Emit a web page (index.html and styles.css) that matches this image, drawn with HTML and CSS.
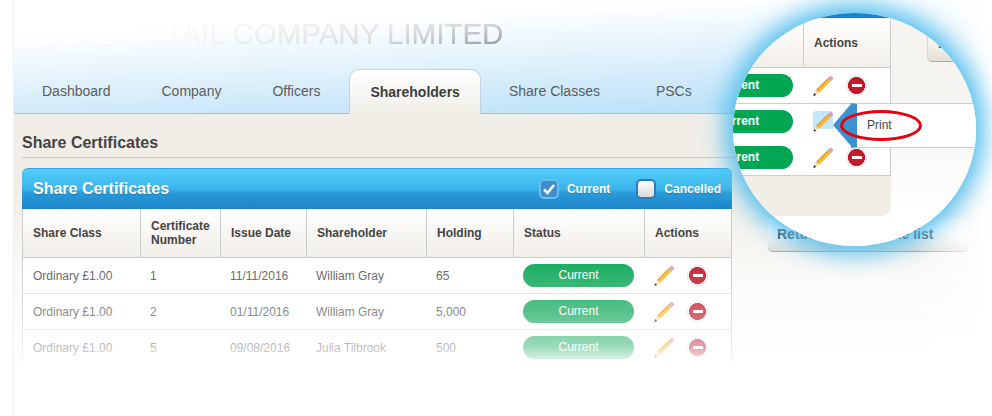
FILE: index.html
```html
<!DOCTYPE html>
<html lang="en">
<head>
    <meta charset="UTF-8">
    <title>Share Certificates</title>
    <link rel="stylesheet" href="styles.css">
</head>
<body>

    <svg class="sprites" width="0" height="0">
        <symbol id="pencil" viewBox="0 0 20 21">
            <polygon points="3,15 14.5,3.5 17.5,6.5 6,18" fill="#f9bd35"/>
            <polygon points="3,15 14.5,3.5 15.4,4.4 3.9,15.9" fill="#e8982a"/>
            <polygon points="3,15 6,18 1,20.5" fill="#f3dcae"/>
            <polygon points="0.3,21 1.2,18 3.2,19.9" fill="#222"/>
            <polygon points="14.5,3.5 17.5,6.5 18.7,5.3 15.7,2.3" fill="#a9a9a9"/>
            <polygon points="15.7,2.3 18.7,5.3 20,4 20,2.6 17.6,0.4 17,1" fill="#ee9aa8"/>
        </symbol>
        <symbol id="tick" viewBox="0 0 14 12">
            <polyline points="2,6.5 5.5,10 12,2" fill="none" stroke="#fff" stroke-width="2.6"/>
        </symbol>
    </svg>

    <div class="page">
        <header class="masthead">
            <div class="brand">THE RETAIL COMPANY LIMITED</div>
            <nav class="tabs">
                <a class="tab">Dashboard</a>
                <a class="tab">Company</a>
                <a class="tab">Officers</a>
                <a class="tab active">Shareholders</a>
                <a class="tab">Share Classes</a>
                <a class="tab">PSCs</a>
            </nav>
        </header>

        <main class="content">
            <h2>Share Certificates</h2>
            <div class="columns">
                <section class="card">
                    <div class="card-head">
                        <h3>Share Certificates</h3>
                        <label class="filter"><span class="box checked"><svg width="14" height="12"><use href="#tick"/></svg></span>Current</label>
                        <label class="filter"><span class="box"></span>Cancelled</label>
                    </div>
                    <table class="cert-table">
                        <colgroup>
                            <col class="w-class"><col class="w-number"><col class="w-date"><col class="w-holder"><col class="w-holding"><col class="w-status"><col class="w-actions">
                        </colgroup>
                        <thead>
                            <tr>
                                <th>Share Class</th>
                                <th>Certificate Number</th>
                                <th>Issue Date</th>
                                <th>Shareholder</th>
                                <th>Holding</th>
                                <th>Status</th>
                                <th>Actions</th>
                            </tr>
                        </thead>
                        <tbody>
                            <tr>
                                <td>Ordinary £1.00</td><td>1</td><td>11/11/2016</td><td>William Gray</td><td>65</td>
                                <td><span class="pill">Current</span></td>
                                <td><div class="actions"><svg class="pencil"><use href="#pencil"/></svg><span class="remove"></span></div></td>
                            </tr>
                            <tr>
                                <td>Ordinary £1.00</td><td>2</td><td>01/11/2016</td><td>William Gray</td><td>5,000</td>
                                <td><span class="pill">Current</span></td>
                                <td><div class="actions"><svg class="pencil"><use href="#pencil"/></svg><span class="remove"></span></div></td>
                            </tr>
                            <tr>
                                <td>Ordinary £1.00</td><td>5</td><td>09/08/2016</td><td>Julia Tilbrook</td><td>500</td>
                                <td><span class="pill">Current</span></td>
                                <td><div class="actions"><svg class="pencil"><use href="#pencil"/></svg><span class="remove"></span></div></td>
                            </tr>
                        </tbody>
                    </table>
                </section>
                <aside class="side">
                    <a class="side-btn">Return to certificate list</a>
                </aside>
            </div>
        </main>

        <div class="fade"></div>

        <!-- magnified bit, same table again -->
        <div class="lens">
            <div class="lens-btn">Return</div>
            <div class="lens-panel">
                <table class="cert-table lens-table">
                    <colgroup>
                        <col class="w-status"><col class="w-actions">
                    </colgroup>
                    <thead>
                        <tr>
                            <th>Status</th>
                            <th>Actions</th>
                        </tr>
                    </thead>
                    <tbody>
                        <tr class="first">
                            <td><span class="pill solid">Current</span></td>
                            <td><div class="actions"><svg class="pencil"><use href="#pencil"/></svg><span class="remove"></span></div></td>
                        </tr>
                        <tr class="no-line">
                            <td><span class="pill solid">Current</span></td>
                            <td><div class="actions"><svg class="pencil hover"><use href="#pencil"/></svg><span class="remove hidden"></span></div></td>
                        </tr>
                        <tr class="last">
                            <td><span class="pill solid">Current</span></td>
                            <td><div class="actions"><svg class="pencil"><use href="#pencil"/></svg><span class="remove"></span></div></td>
                        </tr>
                    </tbody>
                </table>
            </div>
            <div class="popup">Print</div>
            <div class="ring"></div>
        </div>
    </div>

</body>
</html>
```

FILE: styles.css
```css
* {
    box-sizing: border-box;
    margin: 0;
    padding: 0;
}
html, body {
    height: 416px;
    overflow: hidden;
}
body {
    font-family: 'Liberation Sans', Arial, sans-serif;
    background-color: #fff;
    color: #555;
}
.sprites {
    position: absolute;
}
.page {
    position: relative;
    height: 416px;
    margin-left: 13px;
    border-left: 1px solid #f0f0ee;
    overflow: hidden;
}

/* top bit */
.masthead {
    height: 114px;
    padding-top: 17px;
    background: linear-gradient(177deg, #fff 22%, #e6f4fc 48%, #bde2f8 88%);
    border-bottom: 1px solid #a9c0d0;
}
.brand {
    width: max-content;
    margin-left: 43px;
    height: 39px;
    font-size: 29.5px;
    line-height: 33px;
    background: linear-gradient(rgba(255,255,255,0.8), rgba(255,255,255,0) 85%), linear-gradient(to right, #fff 70px, #eee 170px, #ccc 330px, #8a8a8a 445px);
    -webkit-background-clip: text;
    background-clip: text;
    color: transparent;
}
.tabs {
    display: flex;
    padding-left: 2.5px;
    margin-top: 13px;
    height: 45px;
}
.tab {
    padding: 0 25.5px;
    font-size: 14px;
    line-height: 44px;
    color: #5c5c5c;
}
.tab:last-child {
    margin-left: 5px;
}
.tab.active {
    margin: 0 2.5px 0 3.5px;
    padding: 0 20px;
    height: 45px;
    font-weight: bold;
    color: #3c3c3c;
    background: linear-gradient(#fff, #f1eee8);
    border: 1px solid #c3d3dd;
    border-bottom: none;
    border-radius: 10px 10px 0 0;
}

.content {
    height: 302px;
    padding: 0 24px 0 8px;
    background: linear-gradient(#f1eee8 80px, #f9f8f5 150px, #fff 260px);
}
h2 {
    padding: 20px 0 5px;
    font-size: 16px;
    line-height: 18px;
    color: #444;
    border-bottom: 1px solid #cbc8c2;
}
.columns {
    display: flex;
    align-items: flex-start;
    margin-top: 10px;
}
.card {
    width: 710px;
}
.card-head {
    display: flex;
    align-items: center;
    height: 41px;
    padding: 0 11px;
    background: linear-gradient(#52cdf9, #3cb4ec 50%, #2a9ad9 60%, #1b84c8);
    border-top: 1px solid #3a9fe0;
    border-radius: 6px 6px 0 0;
}
.card-head h3 {
    margin-right: auto;
    font-size: 16px;
    color: #fff;
    text-shadow: 0 1px 1px rgba(0,0,0,0.2);
}
.filter {
    display: flex;
    align-items: center;
    gap: 8px;
    margin-left: 26px;
    font-size: 12px;
    font-weight: bold;
    color: #fff;
    text-shadow: 0 1px 1px rgba(0,0,0,0.2);
}
.box {
    display: flex;
    align-items: center;
    justify-content: center;
    width: 20px;
    height: 20px;
    background: linear-gradient(#fff, #d8d8d8);
    border: 2px solid #2f78bd;
    border-radius: 5px;
}
.box.checked {
    background: #3f8fcf;
    border-color: #6fbbec;
}

.cert-table {
    width: 710px;
    table-layout: fixed;
    border-collapse: separate;
    border-spacing: 0;
    background: #fff;
}
.w-class { width: 118px; }
.w-number { width: 80px; }
.w-date { width: 86px; }
.w-holder { width: 120px; }
.w-holding { width: 87px; }
.w-status { width: 131px; }
.w-actions { width: 88px; }
.cert-table th {
    height: 49px;
    padding: 0 10px;
    font-size: 12px;
    line-height: 14px;
    text-align: left;
    color: #444;
    background: linear-gradient(#fff, #f1eee8);
    border-left: 1px solid #ccc;
    border-bottom: 1px solid #ccc;
}
.cert-table th:last-child {
    border-right: 1px solid #ccc;
}
.cert-table td {
    height: 36px;
    padding: 0 10px;
    font-size: 12px;
    border-bottom: 1px solid #ddd;
}
.cert-table td:first-child {
    border-left: 1px solid #ccc;
}
.cert-table td:last-child {
    border-right: 1px solid #ccc;
}
.pill {
    display: block;
    width: 111px;
    height: 23px;
    font-size: 12px;
    line-height: 22px;
    text-align: center;
    color: #fff;
    background: #0ea858;
    border-radius: 12px;
}
.actions {
    display: flex;
    align-items: center;
    gap: 13px;
}
.pencil {
    display: block;
    width: 20px;
    height: 21px;
}
.remove {
    display: flex;
    align-items: center;
    justify-content: center;
    width: 21px;
    height: 21px;
    background: radial-gradient(circle, #c8202f 0, #bd1728 8.2px, #fff 8.8px);
    border: 1px solid #dedede;
    border-radius: 50%;
}
.remove::after {
    content: '';
    width: 10px;
    height: 3px;
    background: #fff;
}

.side {
    margin: 50px 0 0 36px;
}
.side-btn {
    display: block;
    width: 200px;
    height: 34px;
    padding-left: 9px;
    font-size: 14px;
    font-weight: bold;
    line-height: 32px;
    color: #4a4a4a;
    background: linear-gradient(#fff 40%, #e2dfd7);
    border-bottom: 1px solid #aaa;
    border-radius: 5px;
}

/* page washes out at the bottom and right */
.fade {
    position: absolute;
    top: 0;
    left: 0;
    right: 0;
    bottom: 0;
    pointer-events: none;
    background:
        linear-gradient(rgba(255,255,255,0) 255px, rgba(255,255,255,0.12) 275px, rgba(255,255,255,0.3) 312px, rgba(255,255,255,0.58) 346px, #fff 368px),
        linear-gradient(to right, rgba(255,255,255,0) 900px, #fff 975px);
}

/* the magnifier */
.lens {
    position: absolute;
    left: 719px;
    top: 13px;
    width: 243px;
    height: 233px;
    overflow: hidden;
    background: linear-gradient(#f6f4f0 90px, #fff 200px);
    border-radius: 50%;
    box-shadow: 0 0 24px 8px #4dbcee;
}
.lens-panel {
    width: 158px;
    height: 203px;
    padding-top: 6px;
    background: linear-gradient(#1b84c8 5px, #f1eee8 5px);
    border-radius: 0 0 10px 0;
}
.lens-table {
    width: 219px;
    margin-left: -61px;
}
.lens-table .first td,
.lens-table .last td {
    border-bottom-color: #ccc;
}
.lens-table .no-line td {
    border-bottom-color: transparent;
}
.lens-table td:first-child {
    border-left: none;
}
.pill.solid {
    background: #00a651;
    font-weight: bold;
}
.remove.hidden {
    visibility: hidden;
}
.pencil.hover {
    background: linear-gradient(#c4e6fa 86%, transparent 86%);
    border-radius: 3px;
}
.lens-btn {
    position: absolute;
    left: 194px;
    top: 10px;
    width: 90px;
    height: 39px;
    padding: 11px 0 0 10px;
    font-size: 14px;
    font-weight: bold;
    line-height: 16px;
    color: #4a4a4a;
    background: linear-gradient(#f6f4f0 50%, #e2dfd7);
    border: 1px solid #d8d5cd;
    border-bottom: 1px solid #aaa;
    border-radius: 5px;
}
.popup {
    position: absolute;
    left: 118px;
    top: 90px;
    width: 140px;
    height: 45px;
    padding-left: 10px;
    font-size: 12px;
    line-height: 42px;
    color: #444;
    background: #fff;
    border-left: 6px solid #3b92d0;
    border-top: 1px solid #ccc;
    border-bottom: 1px solid #ccc;
}
.popup::before {
    content: '';
    position: absolute;
    left: -24px;
    top: 0;
    border-right: 18px solid #3b92d0;
    border-top: 21px solid transparent;
    border-bottom: 21px solid transparent;
}
.ring {
    position: absolute;
    left: 107px;
    top: 97px;
    width: 82px;
    height: 31px;
    border: 3px solid #e8000f;
    border-radius: 50%;
}
```
